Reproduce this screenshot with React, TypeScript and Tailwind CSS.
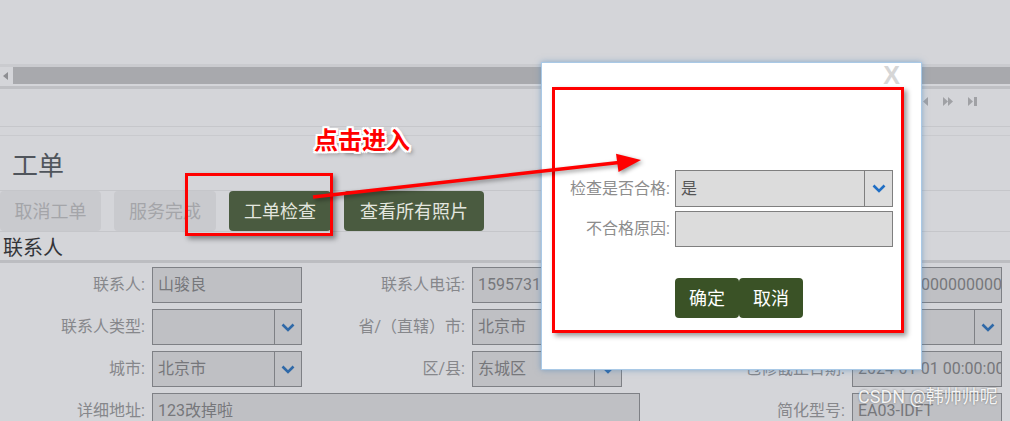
import React from 'react';

function Chevron({ className = '' }: { className?: string }) {
  return (
    <svg width="14" height="9" viewBox="0 0 14 9" className={className}>
      <polyline points="1.5,1.5 7,7 12.5,1.5" fill="none" stroke="currentColor" strokeWidth="2.6" />
    </svg>
  );
}

function Label({ text, w }: { text: string; w: string }) {
  return (
    <div className={`${w} h-[36px] flex items-center justify-end pr-[7px] text-[16px] text-[#86878b] whitespace-nowrap`}>
      {text}
    </div>
  );
}

function Input({ value = '', w = 'w-[150px]' }: { value?: string; w?: string }) {
  return (
    <div className={`${w} h-[36px] border border-[#7e8085] bg-[#bfc0c4] pl-[5px] flex items-center overflow-hidden whitespace-nowrap text-[16px] text-[#76777b]`}>
      {value}
    </div>
  );
}

function Select({ value = '' }: { value?: string }) {
  return (
    <div className="w-[150px] h-[36px] border border-[#7e8085] bg-[#bfc0c4] flex">
      <div className="flex-1 pl-[5px] flex items-center overflow-hidden whitespace-nowrap text-[16px] text-[#76777b]">
        {value}
      </div>
      <div className="w-[27px] border-l border-[#7e8085] flex items-center justify-center text-[#2f69a8]">
        <Chevron />
      </div>
    </div>
  );
}

export default function App() {
  return (
    <div className="relative w-[1010px] h-[421px] overflow-hidden bg-[#d4d5d9] font-['Roboto','Noto_Sans_CJK_SC',sans-serif]">
      {/* page behind the modal */}
      <div className="h-[64px]" />
      <div className="h-[20px] flex border-t-[3px] border-[#cacbcf]">
        <div className="w-[13px] flex items-center pl-[3px]">
          <svg width="5" height="8" viewBox="0 0 5 8">
            <polygon points="5,0 0,4 5,8" fill="#8e8f93" />
          </svg>
        </div>
        <div className="flex-1 bg-[#a8a9ad]" />
      </div>
      <div className="h-[2px]" />
      <div className="h-[3px] bg-[#bfc0c4]" />
      <div className="h-[37px] pt-[8px] flex justify-end pr-[33px] gap-[15px]">
        <svg width="5" height="9" viewBox="0 0 5 9">
          <polygon points="5,0 0,4.5 5,9" fill="#a0a1a5" />
        </svg>
        <svg width="10" height="9" viewBox="0 0 10 9">
          <polygon points="0,0 5,4.5 0,9" fill="#a0a1a5" />
          <polygon points="5,0 10,4.5 5,9" fill="#a0a1a5" />
        </svg>
        <svg width="9" height="9" viewBox="0 0 9 9">
          <polygon points="0,0 5,4.5 0,9" fill="#a0a1a5" />
          <rect x="6" y="0" width="3" height="9" fill="#a0a1a5" />
        </svg>
      </div>
      <div className="h-px bg-[#c6c7cb]" />
      <div className="h-[8px]" />
      <div className="h-px bg-[#c9cace]" />

      <div className="h-[54px] pt-[6px] pl-[12px] flex items-center text-[26px] text-[#50555c]">工单</div>

      <div className="h-px bg-[#c5c6ca]" />
      <div className="h-[40px] flex gap-[13px] text-[18px]">
        <button className="w-[101px] rounded-[4px] bg-[#c9cace] text-[#a4a5a9]">取消工单</button>
        <button className="w-[102px] rounded-[4px] bg-[#c9cace] text-[#a4a5a9]">服务完成</button>
        <button className="w-[102px] rounded-[4px] bg-[#4a5b40] text-[#e3e6df]">工单检查</button>
        <button className="w-[140px] rounded-[4px] bg-[#4a5b40] text-[#e3e6df]">查看所有照片</button>
      </div>
      <div className="h-px bg-[#c5c6ca]" />
      <div className="h-[28px] pt-[4px] pl-[3px] flex items-center text-[20px] text-[#333438]">联系人</div>
      <div className="h-[3px] bg-[#bcbdc1]" />

      <div className="pt-[4px] flex flex-col gap-[6px]">
        <div className="flex">
          <Label w="w-[152px]" text="联系人:" />
          <Input value="山骏良" />
          <Label w="w-[170px]" text="联系人电话:" />
          <Input value="15957318888" />
          <Label w="w-[230px]" text="保修单号:" />
          <Input value="1000000000000000000" />
        </div>
        <div className="flex">
          <Label w="w-[152px]" text="联系人类型:" />
          <Select />
          <Label w="w-[170px]" text="省/（直辖）市:" />
          <Input value="北京市" />
          <Label w="w-[230px]" text="产品类型:" />
          <Select />
        </div>
        <div className="flex">
          <Label w="w-[152px]" text="城市:" />
          <Select value="北京市" />
          <Label w="w-[170px]" text="区/县:" />
          <Select value="东城区" />
          <Label w="w-[230px]" text="包修截止日期:" />
          <Input value="2024-01-01 00:00:00" />
        </div>
        <div className="flex">
          <Label w="w-[152px]" text="详细地址:" />
          <Input value="123改掉啦" w="w-[488px]" />
          <Label w="w-[212px]" text="简化型号:" />
          <Input value="EA03-IDFT" />
        </div>
      </div>

      {/* modal */}
      <div className="absolute left-[541px] top-[62px] w-[381px] h-[308px] bg-white border border-[#a9c9e6] shadow-[0_0_6px_rgba(70,130,190,0.55)]">
        <div className="absolute right-[21px] top-0 leading-none text-[25px] font-bold text-[#d6d6d6] font-['Liberation_Sans',sans-serif]">X</div>
        <div className="pt-[107px] flex flex-col gap-[4px]">
          <div className="flex">
            <div className="w-[133px] h-[37px] pr-[5px] flex items-center justify-end text-[16px] text-[#8d8d8d]">检查是否合格:</div>
            <div className="w-[218px] h-[37px] border border-[#7f7f7f] bg-[#dcdcdc] flex">
              <div className="flex-1 pl-[5px] flex items-center text-[16px] text-[#555]">是</div>
              <div className="w-[28px] border-l border-[#7f7f7f] flex items-center justify-center text-[#1f6ec4]">
                <Chevron />
              </div>
            </div>
          </div>
          <div className="flex">
            <div className="w-[133px] h-[36px] pr-[5px] flex items-center justify-end text-[16px] text-[#8d8d8d]">不合格原因:</div>
            <div className="w-[218px] h-[36px] border border-[#7f7f7f] bg-[#dcdcdc]" />
          </div>
        </div>
        <div className="mt-[31px] pl-[133px] flex">
          <button className="w-[64px] h-[40px] rounded-[4px] bg-[#3a5226] text-white text-[18px]">确定</button>
          <button className="w-[64px] h-[40px] rounded-[4px] bg-[#3a5226] text-white text-[18px]">取消</button>
        </div>
      </div>

      {/* annotations */}
      <div className="absolute left-[552px] top-[87px] w-[352px] h-[246px] border-[3px] border-[#ff0000] shadow-[3px_3px_5px_rgba(0,0,0,0.4)]" />
      <div className="absolute left-[185px] top-[173px] w-[148px] h-[63px] border-[3px] border-[#ff0000] shadow-[3px_3px_5px_rgba(0,0,0,0.4)]" />
      <svg className="absolute left-0 top-0 pointer-events-none drop-shadow-[2px_2px_2px_rgba(0,0,0,0.4)]" width="1010" height="421">
        <line x1="313" y1="197" x2="619" y2="162.5" stroke="#ff0000" strokeWidth="3.5" />
        <polygon points="641,160 616,153.8 618.5,172" fill="#ff0000" />
      </svg>
      <div className="absolute left-[314px] top-[127px] leading-none text-[24px] font-bold text-[#ff0000] font-['Noto_Sans_CJK_SC',sans-serif] [text-shadow:2px_0_0_#fff,-2px_0_0_#fff,0_2px_0_#fff,0_-2px_0_#fff,2px_2px_0_#fff,-2px_-2px_0_#fff,2px_-2px_0_#fff,-2px_2px_0_#fff,3px_3px_4px_rgba(0,0,0,0.5)]">
        点击进入
      </div>
      <div className="absolute left-[858px] top-[388px] leading-none text-[18px] text-white/90 [text-shadow:0_0_2px_rgba(90,90,90,0.8)] font-['Roboto','Noto_Sans_CJK_SC',sans-serif]">
        CSDN @韩帅帅呢
      </div>
    </div>
  );
}
